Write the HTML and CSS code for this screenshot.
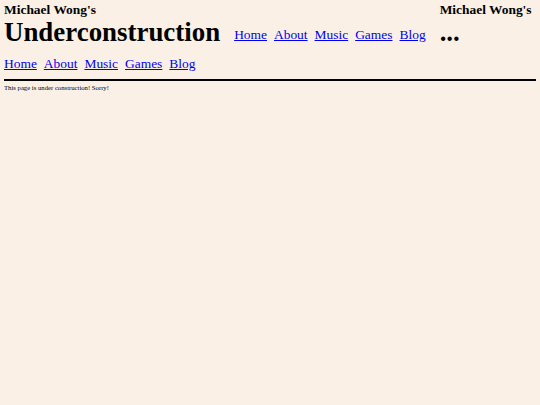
FILE: index.html
```html
<!DOCTYPE html>
<html lang="en">
<head>
<meta charset="utf-8">
<title>Michael Wong's Underconstruction</title>
<link rel="stylesheet" href="styles.css">
</head>
<body>
<header class="header">
  <div class="brand">
    <div class="owner">Michael Wong's</div>
    <h1 class="title">Underconstruction</h1>
  </div>
  <nav class="nav nav-top">
    <a href="#">Home</a>
    <a href="#">About</a>
    <a href="#">Music</a>
    <a href="#">Games</a>
    <a href="#">Blog</a>
  </nav>
  <div class="brand">
    <div class="owner">Michael Wong's</div>
    <div class="title">...</div>
  </div>
</header>
<nav class="nav nav-second">
  <a href="#">Home</a>
  <a href="#">About</a>
  <a href="#">Music</a>
  <a href="#">Games</a>
  <a href="#">Blog</a>
</nav>
<hr class="rule">
<p class="note">This page is under construction! Sorry!</p>
</body>
</html>
```
FILE: styles.css
```css
html {
  background: #faf0e6;
}
body {
  margin: 4px;
  font-family: "Liberation Serif", "Times New Roman", serif;
  font-size: 13.45px;
  color: #000;
  background: #faf0e6;
}
.header {
  display: flex;
  align-items: flex-start;
  gap: 14px;
}
.owner {
  font-weight: bold;
  font-size: 13.45px;
  line-height: 12.5px;
}
.title {
  margin: 1.3px 0 0;
  font-weight: bold;
  font-size: 26.9px;
  line-height: 29.8px;
}
.nav {
  display: flex;
  gap: 7px;
}
.nav a {
  color: #0000ee;
}
.nav-top {
  padding-top: 23px;
}
.nav-second {
  margin-top: 8.5px;
}
.rule {
  margin: 7px 0 3px;
  border: none;
  border-top: 2px solid #000;
  height: 0;
}
.note {
  margin: 0;
  font-size: 6.7px;
}
```
